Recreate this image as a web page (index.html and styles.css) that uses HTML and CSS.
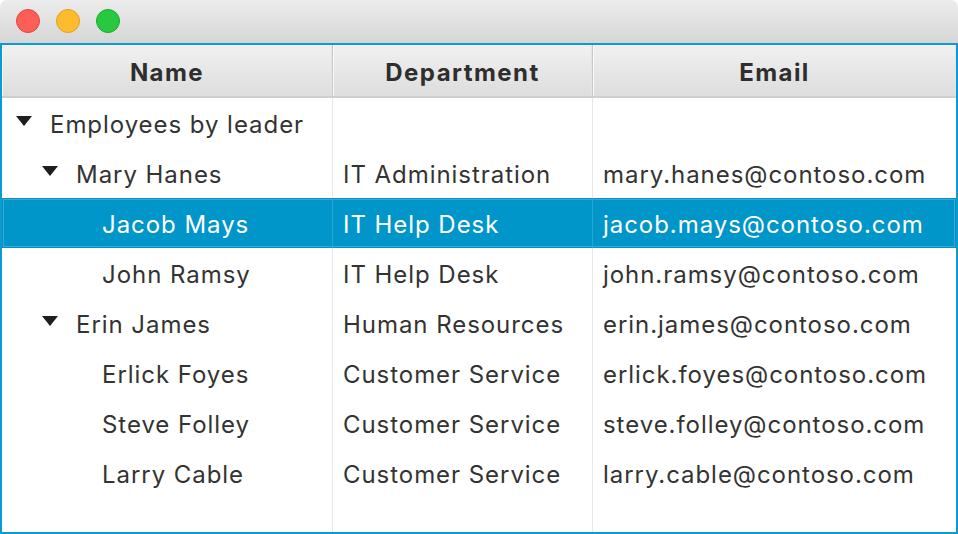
FILE: index.html
```html
<!DOCTYPE html>
<html>
<head>
<meta charset="utf-8">
<link rel="stylesheet" href="styles.css">
</head>
<body>
<div class="window">
  <div class="titlebar">
    <span class="light red"></span>
    <span class="light yellow"></span>
    <span class="light green"></span>
  </div>
  <div class="table">
    <div class="header">
      <div class="hcell">Name</div>
      <div class="hcell">Department</div>
      <div class="hcell">Email</div>
    </div>
    <div class="body">
      <div class="row">
        <div class="cell name lvl0"><span class="tri"></span>Employees by leader</div>
        <div class="cell"></div>
        <div class="cell"></div>
      </div>
      <div class="row">
        <div class="cell name lvl1"><span class="tri"></span>Mary Hanes</div>
        <div class="cell">IT Administration</div>
        <div class="cell">mary.hanes@contoso.com</div>
      </div>
      <div class="row selected">
        <div class="cell name lvl2"><span class="tri none"></span>Jacob Mays</div>
        <div class="cell">IT Help Desk</div>
        <div class="cell">jacob.mays@contoso.com</div>
      </div>
      <div class="row">
        <div class="cell name lvl2"><span class="tri none"></span>John Ramsy</div>
        <div class="cell">IT Help Desk</div>
        <div class="cell">john.ramsy@contoso.com</div>
      </div>
      <div class="row">
        <div class="cell name lvl1"><span class="tri"></span>Erin James</div>
        <div class="cell">Human Resources</div>
        <div class="cell">erin.james@contoso.com</div>
      </div>
      <div class="row">
        <div class="cell name lvl2"><span class="tri none"></span>Erlick Foyes</div>
        <div class="cell">Customer Service</div>
        <div class="cell">erlick.foyes@contoso.com</div>
      </div>
      <div class="row">
        <div class="cell name lvl2"><span class="tri none"></span>Steve Folley</div>
        <div class="cell">Customer Service</div>
        <div class="cell">steve.folley@contoso.com</div>
      </div>
      <div class="row">
        <div class="cell name lvl2"><span class="tri none"></span>Larry Cable</div>
        <div class="cell">Customer Service</div>
        <div class="cell">larry.cable@contoso.com</div>
      </div>
      <div class="row filler">
        <div class="cell"></div>
        <div class="cell"></div>
        <div class="cell"></div>
      </div>
    </div>
  </div>
</div>
</body>
</html>
```

FILE: styles.css
```css
* { box-sizing: border-box; }
html, body { margin: 0; padding: 0; background: #ffffff; }
body {
  font-family: Inter, "Noto Sans", "Liberation Sans", sans-serif;
  color: #333333;
}
.window {
  width: 958px;
  height: 534px;
  display: flex;
  flex-direction: column;
  border-radius: 7px 7px 0 0;
  overflow: hidden;
}
.titlebar {
  height: 43px;
  flex: none;
  background: linear-gradient(#ececec, #d6d6d6);
  display: flex;
  align-items: center;
  gap: 16px;
  padding-left: 16px;
  padding-bottom: 1px;
}
.light {
  width: 24px;
  height: 24px;
  border-radius: 50%;
  display: block;
}
.red { background: #fc5f57; border: 1px solid #e2463f; }
.yellow { background: #fdbc2e; border: 1px solid #e1a116; }
.green { background: #28c840; border: 1px solid #14ae2c; }

.table {
  flex: 1;
  border: 2px solid #0b9bd0;
  display: flex;
  flex-direction: column;
  min-height: 0;
}
.header {
  height: 53px;
  flex: none;
  display: grid;
  grid-template-columns: 331px 260px 1fr;
  border-bottom: 2px solid #cfcfcf;
}
.hcell {
  background: linear-gradient(#f1f1f1, #dddddd);
  border-right: 1px solid #c8c8c8;
  box-shadow: inset 1px 1px 0 #fafafa, inset -1px 0 0 #e4e4e4;
  display: flex;
  align-items: center;
  justify-content: center;
  font-weight: 700;
  font-size: 24px;
  letter-spacing: 1.45px;
  color: #2e2e2e;
  padding-top: 3px;
}
.hcell:last-child { border-right: none; }
.body {
  flex: 1;
  display: flex;
  flex-direction: column;
}
.row {
  height: 50px;
  flex: none;
  display: grid;
  grid-template-columns: 331px 260px 1fr;
}
.row.filler { flex: 1; height: auto; }
.cell {
  display: flex;
  align-items: center;
  font-size: 24px;
  letter-spacing: 0.95px;
  padding-left: 10px;
  border-right: 1px solid #e8e8e8;
  white-space: nowrap;
  padding-top: 2px;
}
.cell:last-child { border-right: none; }
.name { padding-left: 14px; }
.name.lvl1 { padding-left: 40px; }
.name.lvl2 { padding-left: 66px; }
.tri {
  width: 0;
  height: 0;
  border-left: 8px solid transparent;
  border-right: 8px solid transparent;
  border-top: 10px solid #1e1e1e;
  margin-right: 18px;
  margin-top: -6px;
  flex: none;
}
.tri.none { border-top-color: transparent; }
.row.selected {
  background: #0096c9;
  box-shadow: inset 0 0 0 1px #0590c2, inset 0 0 0 2px #38aad6;
  color: #ffffff;
}
.row.selected .cell { border-right-color: #2ba3d0; }
```
